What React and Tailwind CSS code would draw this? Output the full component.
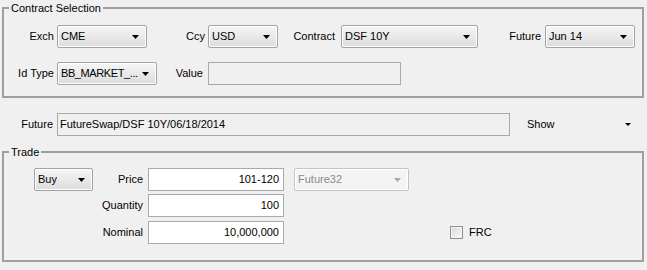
import React from 'react';

const Arrow = ({ disabled, small }) => (
  <svg width={small ? 6 : 7} height={small ? 3 : 4} viewBox={small ? '0 0 6 3' : '0 0 7 4'} className="shrink-0">
    <path d={small ? 'M0 0h6L3 3z' : 'M0 0h7L3.5 4z'} fill={disabled ? '#a8a8a8' : '#000'} />
  </svg>
);

const Combo = ({ value, className, textClassName = '', disabled }) => (
  <div
    className={`flex items-center justify-between h-[23px] pl-[3px] pr-[7px] rounded-[2px] border shadow-[inset_0_0_0_1px_#ffffff] ${
      disabled
        ? 'border-[#c4c4c4] bg-[#f4f4f4] text-[#8a8a8a]'
        : 'border-[#a3a3a3] bg-gradient-to-b from-[#f6f6f6] to-[#dcdcdc] text-black'
    } ${className}`}
  >
    <span className={`whitespace-nowrap overflow-hidden ${textClassName}`}>{value}</span>
    <Arrow disabled={disabled} />
  </div>
);

const Field = ({ value, className, readOnly }) => (
  <div
    className={`flex items-center h-[23px] border border-[#a9a9a9] ${
      readOnly ? 'bg-[#f0f0f0] pl-[2px]' : 'bg-white justify-end pr-[4px]'
    } ${className}`}
  >
    {value}
  </div>
);

const Label = ({ children, className }) => (
  <div className={`text-right shrink-0 ${className}`}>{children}</div>
);

export default function App() {
  return (
    <div className="w-[647px] h-[270px] bg-[#f0f0f0] text-black text-[11px] leading-[13px] font-['Liberation_Sans',Arial,sans-serif] overflow-hidden">
      <fieldset className="ml-[2px] w-[642px] border-2 border-[#9f9f9f] pt-[9px] pb-[11px]">
        <legend className="ml-[5px] px-[2px] leading-[16px]">Contract Selection</legend>
        <div className="flex items-center">
          <Label className="w-[53px] pr-[3px]">Exch</Label>
          <Combo value="CME" className="w-[90px]" />
          <Label className="w-[61px] pr-[3px]">Ccy</Label>
          <Combo value="USD" className="w-[70px]" />
          <Label className="w-[63px] pr-[6px]">Contract</Label>
          <Combo value="DSF 10Y" className="w-[137px]" />
          <Label className="w-[67px] pr-[4px]">Future</Label>
          <Combo value="Jun 14" className="w-[90px]" />
        </div>
        <div className="flex items-center mt-[14px]">
          <Label className="w-[53px] pr-[3px]">Id Type</Label>
          <Combo value="BB_MARKET_..." textClassName="tracking-[-0.4px]" className="w-[100px] pr-[5px]" />
          <Label className="w-[51px] pr-[5px]">Value</Label>
          <div className="w-[193px] h-[23px] border border-[#a9a9a9]" />
        </div>
      </fieldset>

      <div className="flex items-center mt-[15px] mb-[8px]">
        <Label className="w-[57px] pr-[4px]">Future</Label>
        <Field value="FutureSwap/DSF 10Y/06/18/2014" readOnly className="w-[453px]" />
        <div className="ml-[17px] w-[104px] flex items-center justify-between">
          <span>Show</span>
          <Arrow small />
        </div>
      </div>

      <fieldset className="ml-[2px] w-[642px] border-2 border-[#9f9f9f] pt-[8px] pb-[16px]">
        <legend className="ml-[5px] px-[2px] leading-[16px]">Trade</legend>
        <div className="flex items-center">
          <div className="w-[30px] shrink-0" />
          <Combo value="Buy" className="w-[59px]" />
          <Label className="w-[55px] pr-[5px]">Price</Label>
          <Field value="101-120" className="w-[136px]" />
          <Combo value="Future32" disabled className="ml-[10px] w-[115px]" />
        </div>
        <div className="flex items-center mt-[3px]">
          <Label className="w-[144px] pr-[5px]">Quantity</Label>
          <Field value="100" className="w-[136px]" />
        </div>
        <div className="flex items-center mt-[4px]">
          <Label className="w-[144px] pr-[5px]">Nominal</Label>
          <Field value="10,000,000" className="w-[136px]" />
          <div className="ml-[166px] w-[13px] h-[13px] border border-[#8f8f8f] bg-gradient-to-br from-[#d8d8d8] to-[#fafafa] shadow-[inset_0_0_0_1px_#f4f4f4]" />
          <span className="ml-[6px]">FRC</span>
        </div>
      </fieldset>
    </div>
  );
}
